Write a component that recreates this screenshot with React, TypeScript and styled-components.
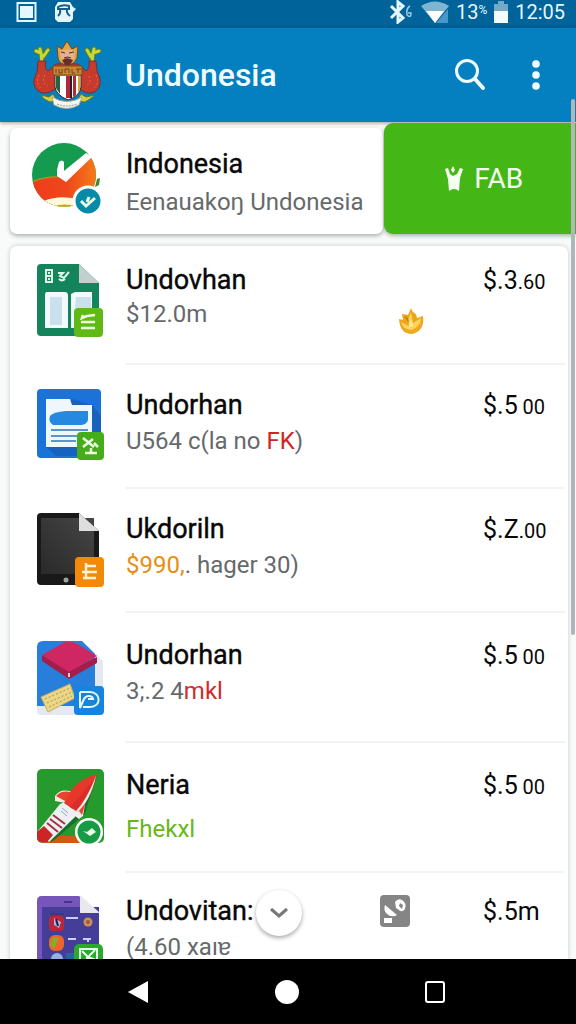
import React from "react";
import styled, { createGlobalStyle } from "styled-components";

const GlobalStyle = createGlobalStyle`
  * { box-sizing: border-box; }
  body { margin: 0; background: #f9fafa; font-family: Roboto, "Liberation Sans", sans-serif; }
  button { border: 0; padding: 0; background: none; font: inherit; color: inherit; cursor: pointer; }
  svg { display: block; flex: none; }
`;

const Screen = styled.div`
  position: relative;
  display: flex;
  flex-direction: column;
  height: 100vh;
  overflow: hidden;
`;

const StatusBar = styled.div`
  flex: none;
  display: flex;
  align-items: center;
  gap: 16px;
  height: 28px;
  padding: 0 11px 4px 16px;
  background: #00639a;
  color: #e4f7ff;
  font-size: 20px;
  line-height: 24px;
`;

const StatusRight = styled.div`
  display: flex;
  align-items: center;
  gap: 7px;
  margin-left: auto;
`;

const Percent = styled.span`
  display: flex;
  align-items: flex-start;
  small { font-size: 12px; line-height: 20px; }
`;

const AppBar = styled.header`
  position: relative;
  z-index: 1;
  flex: none;
  display: flex;
  align-items: center;
  height: 94px;
  padding: 0 24px 0 32px;
  background: #0480c0;
  color: #effcff;
  box-shadow: 0 1px 4px rgba(0, 0, 0, 0.4);
`;

const AppTitle = styled.h1`
  flex: 1;
  margin: 0 0 0 21px;
  font-size: 32px;
  line-height: 40px;
  font-weight: 500;
`;

const IconButton = styled.button`
  display: grid;
  place-items: center;
  width: 32px;
  height: 48px;
  & + & { margin-left: 34px; }
`;

const Content = styled.main`
  flex: 1;
  display: flex;
  flex-direction: column;
  gap: 12px;
  min-height: 0;
  overflow: hidden;
`;

const Featured = styled.section`
  position: relative;
  z-index: 1;
  flex: none;
  display: flex;
  align-items: flex-end;
  gap: 1px;
  height: 112px;
  padding-left: 10px;
`;

const FeaturedCard = styled.div`
  flex: 1;
  display: flex;
  gap: 22px;
  min-width: 0;
  height: 106px;
  padding: 14px 0 0 22px;
  border-radius: 7px;
  background: #fff;
  box-shadow: 0 2px 4px rgba(0, 0, 0, 0.3);
`;

const FabButton = styled.button`
  flex: none;
  display: flex;
  align-items: center;
  justify-content: center;
  gap: 10px;
  width: 34%;
  height: 111px;
  padding-left: 8px;
  border-radius: 9px 0 0 9px;
  background: #44b717;
  box-shadow: 0 2px 4px rgba(0, 0, 0, 0.3);
  color: #f4fff0;
  font-size: 28px;
  line-height: 32px;
`;

const List = styled.ul`
  flex: none;
  margin: 0 8px 0 10px;
  padding: 0;
  list-style: none;
  border-radius: 7px 7px 0 0;
  background: #fff;
  box-shadow: 0 0 5px rgba(0, 0, 0, 0.2);
`;

const Row = styled.li<{ $height: number; $top: number }>`
  display: flex;
  gap: 22px;
  height: ${(p) => p.$height}px;
  padding: 0 3px 0 26px;
  & > svg { margin-top: ${(p) => p.$top}px; }
  & > div { padding-top: ${(p) => p.$top}px; }
`;

const RowBody = styled.div`
  flex: 1;
  display: flex;
  padding-right: 20px;
  border-bottom: 2px solid #f2f4f4;
`;

const Labels = styled.div<{ $gap: number }>`
  flex: 1;
  display: flex;
  flex-direction: column;
  gap: ${(p) => p.$gap}px;
  white-space: nowrap;
`;

const FeaturedLabels = styled(Labels)`
  padding-top: 6px;
`;

const Title = styled.h2`
  margin: 0;
  font-size: 27px;
  line-height: 32px;
  font-weight: 400;
  color: #080808;
  -webkit-text-stroke: 0.4px #080808;
`;

const Subtitle = styled.p`
  margin: 0;
  font-size: 24px;
  line-height: 32px;
  color: #66696b;
`;

const Tint = styled.span<{ $color: string }>`
  color: ${(p) => p.$color};
`;

const Aside = styled.div<{ $second?: boolean }>`
  width: 104px;
  padding: ${(p) => (p.$second ? "44px 0 0 20px" : "0")};
`;

const Price = styled.span`
  width: 62px;
  display: flex;
  justify-content: space-between;
  align-items: baseline;
  align-self: flex-start;
  padding-top: 1px;
  font-size: 25px;
  line-height: 32px;
  color: #080808;
  small { font-size: 20px; }
`;

const ExpandButton = styled.button`
  position: absolute;
  left: 256px;
  bottom: 88px;
  display: grid;
  place-items: center;
  width: 46px;
  height: 46px;
  border-radius: 50%;
  background: #fff;
  box-shadow: 0 2px 4px rgba(0, 0, 0, 0.35);
`;

const ScrollThumb = styled.div`
  position: absolute;
  z-index: 2;
  top: 99px;
  right: 1px;
  width: 4px;
  height: 536px;
  border-radius: 2px;
  background: #b0b7ba;
`;

const NavBar = styled.nav`
  position: relative;
  flex: none;
  display: flex;
  justify-content: center;
  height: 65px;
  padding-right: 3px;
  background: #000;
`;

const NavButton = styled.button`
  display: grid;
  place-items: center;
  width: 26%;
  height: 65px;
`;

const Emblem = () => (
  <svg width="72" height="68" viewBox="0 0 72 68" aria-hidden="true">
    <g fill="none" strokeLinecap="round" strokeLinejoin="round">
      <path d="M10 22 9 12 4 10M10 16 8 8M11 16 16 9M60 22 61 12 67 10M60 16 62 8M59 16 55 9" stroke="#5c7d27" strokeWidth="5" />
      <path d="M10 22 9 12 4 10M10 16 8 8M11 16 16 9M60 22 61 12 67 10M60 16 62 8M59 16 55 9" stroke="#c6d936" strokeWidth="3" />
    </g>
    <path d="M6 20 14 20Q12 28 16 30L24 23H46L54 30Q58 28 57 20L64 20 65 30Q72 43 64 50 56 55 48 48L36 55 23 48Q14 55 6 50-2 43 5 31Z" fill="#c63b2c" stroke="#733034" />
    <path d="M7 34Q3 43 10 48M13 34Q9 42 16 45M64 34Q68 43 61 48M57 35Q60 42 54 45" fill="none" stroke="#ec6850" strokeDasharray="2 2" />
    <path d="M25 5 30 8 35 0 40 8 46 5 45 17Q42 24 35 24 27 23 26 17Z" fill="#e0a73a" stroke="#724522" />
    <path d="M28 10Q35 7 43 10L42 18 36 22 29 18Z" fill="#e8b18d" />
    <path d="m29 11 4 1m4 0 5-1M32 17q3-2 7 0" stroke="#4a2929" fill="none" />
    <path d="m30 19 5-2 6 2-3 5h-5Z" fill="#672d2a" />
    <path d="M23 34H49V46Q48 55 36 59 24 54 23 46Z" fill="#fff" stroke="#40252b" />
    <path d="M24 35h4v18l-4-6Z" fill="#22653c" />
    <path d="M34 35h4v22l-4 0ZM41 35h3v19l-3 2Z" fill="#b32839" />
    <path d="M38 35h2v22h-2Z" fill="#301c29" />
    <path d="M46 35h2v13l-2 4Z" fill="#d4a631" />
    <path d="M21 25h29v9H21Z" fill="#cb872d" stroke="#744c20" />
    <path d="M24 28v4m3-4v4h3v-4m3 0v4m0-4h4v4m3-4v4h3m3-4v4m-2-4h5" fill="none" stroke="#773a24" />
    <path d="M9 54 17 56 21 53 25 60 18 61 12 58ZM63 54 54 56 49 53 45 60 53 61 58 58Z" fill="#d3cf42" stroke="#60762a" />
    <path d="M20 56Q35 65 50 56L47 64Q35 71 22 64Z" fill="#f7f7ef" stroke="#a5a694" />
    <path d="M25 63q10 4 20 0" fill="none" stroke="#8b9799" strokeDasharray="2 1" />
  </svg>
);

const CountryIcon = () => (
  <svg width="72" height="76" viewBox="0 0 72 76" aria-hidden="true">
    <defs>
      <clipPath id="disc"><circle cx="32" cy="33" r="32" /></clipPath>
      <linearGradient id="lava"><stop stopColor="#ee3b1a" /><stop offset=".55" stopColor="#ef481b" /><stop offset="1" stopColor="#f47b18" /></linearGradient>
    </defs>
    <g clipPath="url(#disc)">
      <path d="M0 0H66V68H0Z" fill="#159b50" />
      <path d="M0 40Q14 34 34 35L64 10V68H0Z" fill="url(#lava)" />
      <path d="M0 40Q14 34 32 35" fill="none" stroke="#a69124" strokeWidth="1.5" />
      <path d="M12 59Q28 52 50 58V72H12Z" fill="#fff9dc" />
      <path d="M22 64q10-3 22 0v3H22Z" fill="#c3a91d" />
    </g>
    <path d="M25 28 27 20Q30 17 32 20V29L54 11 60 15 34 40 25 34Z" fill="#fff" />
    <path d="m65 37 3-1-1 7-4 2Z" fill="#3d8828" />
    <circle cx="56" cy="59" r="15.500" fill="#fff" />
    <circle cx="56" cy="59" r="12.500" fill="#078aaa" />
    <path d="M49 59 54 64 63 56M55 60 57 55" fill="none" stroke="#e9ffe1" strokeWidth="3" />
  </svg>
);

const SheetIcon = () => (
  <svg width="68" height="74" viewBox="0 0 68 74" aria-hidden="true">
    <path d="M5 0H43L63 19V68a4 4 0 0 1-4 4H5a4 4 0 0 1-4-4V4a4 4 0 0 1 4-4Z" fill="#13845b" />
    <path d="M43 0 63 19H43Z" fill="#c2d0cd" />
    <path d="M10 28H29Q32 28 32 32V64H9V30ZM35 30 39 28H56V64H35Z" fill="#f2fafb" />
    <path d="M14 33H26V61H14ZM40 33H55V44H39Z" fill="#cae0ec" />
    <path d="M10 6h6v12h-6ZM10 12h6M13 8v2m0 4v2M22 9h5l-3 3 4 2 5-6m-10 7q3 3 6 0" fill="none" stroke="#dcf8e9" strokeWidth="2" />
    <rect x="38" y="44" width="29" height="29" rx="4" fill="#60ba16" />
    <path d="M45 58h14M45 64h14M47 51l-1 3 5-2 8-1" fill="none" stroke="#efffdf" strokeWidth="2.500" />
  </svg>
);

const DocumentIcon = () => (
  <svg width="68" height="74" viewBox="0 0 68 74" aria-hidden="true">
    <rect x="1" width="64" height="69" rx="4" fill="#1b73d8" />
    <path d="M36 10 56 16 65 27V55L45 67H20L10 58Z" fill="#1662bc" />
    <path d="M10 10H34L36 16H56V58H10Z" fill="#eef7fc" />
    <path d="M14 27Q17 23 30 22H52V31Q51 35 46 36H17Q12 33 14 27Z" fill="#2689df" />
    <path d="M15 41H52M15 47H52M15 52H40" stroke="#2e76b8" strokeWidth="1.500" />
    <rect x="41" y="43" width="27" height="28" rx="4" fill="#44ad19" />
    <path d="m47 49 11 9M47 58l10-8M58 54l4 4M49 64h12M55 59v5" fill="none" stroke="#edffe3" strokeWidth="2.500" />
  </svg>
);

const TabletIcon = () => (
  <svg width="68" height="74" viewBox="0 0 68 74" aria-hidden="true">
    <defs><linearGradient id="glass" x1="0" y1="1" x2="1" y2="0"><stop stopColor="#292929" /><stop offset="1" stopColor="#464646" /></linearGradient></defs>
    <path d="M5 0H43L63 18V68a4 4 0 0 1-4 4H5a4 4 0 0 1-4-4V4a4 4 0 0 1 4-4Z" fill="#191919" />
    <path d="M5 5H58V61H5Z" fill="url(#glass)" />
    <path d="M43 0 63 18H43Z" fill="#dedede" />
    <circle cx="30" cy="67" r="2.500" fill="#a0a0a0" />
    <rect x="39" y="44" width="29" height="30" rx="4" fill="#f38908" />
    <path d="M50 50V66M50 53H60M46 59H61M47 65H60" fill="none" stroke="#fff3d3" strokeWidth="2.500" />
  </svg>
);

const BoxIcon = () => (
  <svg width="68" height="76" viewBox="0 -2 68 76" aria-hidden="true">
    <path d="M9 5H52L67 20V70a4 4 0 0 1-4 4H5a4 4 0 0 1-4-4V62Z" fill="#e4e8ef" />
    <path d="M7 0H46L59 13V65H1V6Q1 0 7 0Z" fill="#277fdb" />
    <path d="M6 14 33 30 61 16V22L33 38 6 20Z" fill="#a51e4a" />
    <path d="M6 14 27 2Q34-1 41 3L61 15 33 31Z" fill="#cf2761" />
    <path d="M33 32v4" stroke="#fff" strokeWidth="1.500" />
    <path d="M5 56 34 43 39 57 12 71Z" fill="#ead685" stroke="#c5af62" />
    <path d="m9 58 25-11M11 62l25-11M13 66l23-11" stroke="#a99551" strokeDasharray="2 2" fill="none" />
    <rect x="38" y="45" width="30" height="29" rx="4" fill="#1584df" />
    <path d="M44 51H54C65 51 66 66 54 66H47M44 51V67L48 58C50 54 56 54 57 58H52" fill="none" stroke="#e5f8ff" strokeWidth="2" />
  </svg>
);

const RocketIcon = () => (
  <svg width="68" height="78" viewBox="0 0 68 78" aria-hidden="true">
    <rect x="1" width="67" height="74" rx="5" fill="#279a2d" />
    <path d="M12 67H50V74H5Z" fill="#cf5a18" />
    <path d="M61 7 52 34 49 45 17 72 11 73 30 50Z" fill="#17712c" />
    <path d="M19 27Q26 18 38 24L30 34 19 32ZM39 45 50 29 47 47 43 50 39 47Z" fill="#f7eee9" />
    <path d="M20 27Q27 20 36 24L29 32ZM43 42 50 32 46 46Z" fill="#e8442d" />
    <path d="M24 35 31 32 42 42 39 48 13 73 2 62Z" fill="#edf0f3" />
    <path d="M61 5Q44 10 36 20L28 34 41 43Q54 33 61 5Z" fill="#e6382a" />
    <path d="M60 7Q44 31 36 40L41 43Q54 33 60 7Z" fill="#f7ece7" />
    <path d="M60 7Q44 28 34 38L40 42Q50 32 60 7Z" fill="#d92e27" />
    <path d="m17 46 12 9M14 50l12 9M11 54l11 9" stroke="#a23342" strokeWidth="2" />
    <path d="m25 42 6 5M26 39l6 5" stroke="#9ba5bd" strokeWidth="1" />
    <path d="M8 57 17 66 11 73H6Q1 73 1 68V63Z" fill="#cb2526" />
    <circle cx="53" cy="63" r="14" fill="#fff" />
    <circle cx="53" cy="63" r="11.500" fill="#189b45" />
    <path d="M47 62 51 63 56 59 60 63 54 67Z" fill="#e8ffe8" />
  </svg>
);

const PhoneIcon = () => (
  <svg width="68" height="78" viewBox="0 0 68 78" aria-hidden="true">
    <path d="M5 1H43L63 18V78H1V6a5 5 0 0 1 4-5Z" fill="#7656bb" />
    <path d="M6 12H63V78H6Z" fill="#443e99" />
    <path d="M44 0 64 18H44Z" fill="#e9e8ee" />
    <path d="M28 7h8M14 19h14" stroke="#403681" strokeWidth="2" />
    <rect x="13" y="21" width="15" height="15" rx="4" fill="#bb263a" />
    <path d="m18 23 7 4-2 6-5-3Z" fill="#a7b6e2" /><path d="m20 24 2 7" stroke="#251c3b" strokeWidth="2" />
    <rect x="13" y="40" width="15" height="16" rx="6" fill="#ef642c" />
    <path d="m14 50 3-8 6 1-5 11Z" fill="#8da92c" />
    <path d="M30 23h12M32 44h8M47 44h8M52 44v3" stroke="#c9cdf8" strokeWidth="2" />
    <circle cx="52" cy="27" r="4.500" fill="#cf9152" /><circle cx="52" cy="27" r="2" fill="#935a4d" />
    <circle cx="21" cy="64" r="6" fill="#95b2e1" />
    <path d="M30 58H40V78H30Z" fill="#2464a5" />
    <rect x="38" y="49" width="29" height="29" rx="5" fill="#29a92d" />
    <path d="M44 54H61V65H44ZM46 56l5 5v4M59 55l-7 7 8 3" fill="none" stroke="#eaffea" strokeWidth="2" />
  </svg>
);

const Flame = () => (
  <svg width="25" height="26" viewBox="0 0 25 26" role="img" aria-label="Hot">
    <path d="M12 0Q13 4 17 6L18 10 24 8Q26 23 13 26 1 26 0 11L4 12 3 6 9 7Z" fill="#eda51c" />
    <path d="M12 4 14 15 22 10Q22 21 13 22 4 22 2 14L10 18 9 12Z" fill="#ffd45a" />
    <path d="m5 8 4 2 1 5Z" fill="#c67f0b" />
    <path d="m12 11 2 7-4 1Z" fill="#ffedab" />
    <path d="M5 22Q17 24 23 12 23 22 13 25 8 25 5 22Z" fill="#f0ab1e" />
  </svg>
);

const SatelliteIcon = () => (
  <svg width="32" height="32" viewBox="0 0 32 32" role="img" aria-label="Satellite">
    <rect x="1" y="0" width="30" height="32" rx="4" fill="#858585" />
    <path d="M6 10 18 20Q13 23 8 19 4 15 6 10ZM5 23h8v5H5Z" fill="#fff" />
    <path d="M16 7Q19 3 23 5 28 8 26 14 23 18 20 15L17 13Z" fill="#fff" />
    <path d="m21 8 3 2-1 4-3-3Z" fill="#858585" />
  </svg>
);

const PersonIcon = () => (
  <svg width="20" height="28" viewBox="0 0 20 28" fill="currentColor" aria-hidden="true">
    <path d="M1 4 4 3 6 9 9 11 13 9 16 3 19 4 16 13 15 26Q10 22 5 26L4 14Z" />
    <path d="m9 1 2 4-2 3-2-3Z" />
  </svg>
);

type Item = {
  Icon: React.FC;
  title: string;
  detail: React.ReactNode;
  price: string;
  cents?: string;
  height: number;
  top: number;
  gap: number;
  aside?: React.ReactNode;
  low?: boolean;
};

const items: Item[] = [
  { Icon: SheetIcon, title: "Undovhan", detail: "$12.0m", price: "$.3", cents: ".60", height: 119, top: 18, gap: 2, aside: <Flame />, low: true },
  { Icon: DocumentIcon, title: "Undorhan", detail: <>U564 c(la no <Tint $color="#d32523">FK</Tint>)</>, price: "$.5", cents: "00", height: 124, top: 24, gap: 4 },
  { Icon: TabletIcon, title: "Ukdoriln", detail: <><Tint $color="#e98d13">$990,</Tint>. hager 30)</>, price: "$.Z", cents: ".00", height: 124, top: 24, gap: 4 },
  { Icon: BoxIcon, title: "Undorhan", detail: <>3;.2 4<Tint $color="#d22a2b">mkl</Tint></>, price: "$.5", cents: "00", height: 130, top: 26, gap: 4 },
  { Icon: RocketIcon, title: "Neria", detail: <Tint $color="#68b719">Fhekxl</Tint>, price: "$.5", cents: "00", height: 130, top: 26, gap: 12 },
  { Icon: PhoneIcon, title: "Undovitan:", detail: "(4.60 xaıɐ", price: "$.5m", height: 124, top: 22, gap: 4, aside: <SatelliteIcon /> },
];

export default function App() {
  return (
    <Screen>
      <GlobalStyle />
      <StatusBar>
        <svg width="21" height="22" viewBox="0 0 21 22" aria-hidden="true">
          <rect x="1.500" y="2" width="18" height="18" fill="none" stroke="currentColor" strokeWidth="2" />
          <rect x="4" y="5" width="13" height="12" fill="currentColor" />
        </svg>
        <svg width="24" height="22" viewBox="0 0 24 22" aria-hidden="true">
          <path d="M5 1H17L20 6 23 8 20 11V18L17 21H5L2 18V6Z" fill="currentColor" />
          <path d="M5 6Q10 3 16 5V8H5ZM7 9Q8 12 5 15M14 8Q13 12 17 15" fill="none" stroke="#17608d" strokeWidth="2" />
        </svg>
        <StatusRight>
          <svg width="26" height="24" viewBox="0 0 26 24" fill="none" stroke="currentColor" strokeWidth="3" aria-hidden="true">
            <path d="m3 6 12 12-5 4V2l5 4L3 18" />
            <path d="M22 6q-4 2-3 9 4 4 4-2h-3" strokeWidth="1.500" opacity=".7" />
          </svg>
          <svg width="28" height="22" viewBox="0 0 28 22" aria-hidden="true">
            <path d="M0 5Q14-4 28 5L14 22Z" fill="#7fb5d1" />
            <path d="M5 10H23L14 22Z" fill="#fff" /><path d="M27 8V22H15Z" fill="#4797c8" />
          </svg>
          <Percent>13<small>%</small></Percent>
          <svg width="14" height="22" viewBox="0 0 14 22" aria-hidden="true">
            <path d="M4 0H10V3H14V11H0V3H4Z" fill="#76a9c7" /><path d="M0 10H14V22H0Z" fill="#f5fdff" />
          </svg>
          <span>12:05</span>
        </StatusRight>
      </StatusBar>
      <AppBar>
        <Emblem />
        <AppTitle>Undonesia</AppTitle>
        <IconButton aria-label="Search">
          <svg width="32" height="32" viewBox="0 0 32 32" fill="none" stroke="currentColor" strokeWidth="3" strokeLinecap="round">
            <circle cx="13" cy="12" r="10.500" /><path d="m21 20 8 9" strokeWidth="4" />
          </svg>
        </IconButton>
        <IconButton aria-label="More options">
          <svg width="8" height="30" viewBox="0 0 8 30" fill="currentColor">
            <circle cx="4" cy="4" r="3.800" /><circle cx="4" cy="15" r="3.800" /><circle cx="4" cy="26" r="3.800" />
          </svg>
        </IconButton>
      </AppBar>
      <Content>
        <Featured>
          <FeaturedCard>
            <CountryIcon />
            <FeaturedLabels $gap={6}>
              <Title>Indonesia</Title>
              <Subtitle>Eenauakoŋ Undonesia</Subtitle>
            </FeaturedLabels>
          </FeaturedCard>
          <FabButton><PersonIcon />FAB</FabButton>
        </Featured>
        <List>
          {items.map((item, i) => (
            <Row key={i} $height={item.height} $top={item.top}>
              <item.Icon />
              <RowBody>
                <Labels $gap={item.gap}>
                  <Title>{item.title}</Title>
                  <Subtitle>{item.detail}</Subtitle>
                </Labels>
                {item.aside && <Aside $second={item.low}>{item.aside}</Aside>}
                <Price>
                  <span>{item.price}</span>
                  {item.cents && <small>{item.cents}</small>}
                </Price>
              </RowBody>
            </Row>
          ))}
        </List>
      </Content>
      <ExpandButton aria-label="Show more">
        <svg width="18" height="12" viewBox="0 0 18 12" fill="none" stroke="#777" strokeWidth="3"><path d="m1 2 8 7 8-7" /></svg>
      </ExpandButton>
      <ScrollThumb />
      <NavBar>
        <NavButton aria-label="Back"><svg width="22" height="24" viewBox="0 0 22 24"><path d="M21 1V23L1 12Z" fill="#fff" /></svg></NavButton>
        <NavButton aria-label="Home"><svg width="26" height="26" viewBox="0 0 26 26"><circle cx="13" cy="13" r="12" fill="#fff" /></svg></NavButton>
        <NavButton aria-label="Recent apps"><svg width="20" height="22" viewBox="0 0 20 22"><rect x="1" y="1" width="18" height="20" rx="2" fill="none" stroke="#fff" strokeWidth="2" /></svg></NavButton>
      </NavBar>
    </Screen>
  );
}
